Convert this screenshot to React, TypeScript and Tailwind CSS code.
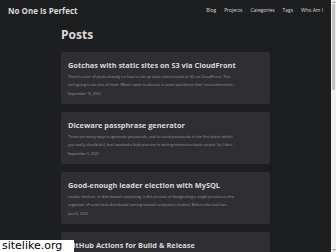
import React from 'react';

const posts = [
	{
		title: 'Gotchas with static sites on S3 via CloudFront',
		lines: [
			"There's a ton of posts already on how to set up static sites hosted on S3 via CloudFront. This",
			"isn't going to be one of them. What I want to discuss is some weirdness that I encountered wi...",
		],
		date: 'September 16, 2022',
	},
	{
		title: 'Diceware passphrase generator',
		lines: [
			'There are many ways to generate passwords, and to avoid passwords in the first place (which',
			'you really should do), but I wanted a little practice in writing interactive bash scripts. So I deci...',
		],
		date: 'September 5, 2022',
	},
	{
		title: 'Good-enough leader election with MySQL',
		lines: [
			'Leader election, in distributed computing, is the process of designating a single process as the',
			'organizer of some task distributed among several computers (nodes). Before the task has...',
		],
		date: 'June 6, 2022',
	},
	{
		title: 'GitHub Actions for Build & Release',
		lines: [
			'Continuous integration and delivery is one of those things that every project should have from',
			'the very start, and GitHub Actions makes it easy to set up for small projects like this one...',
		],
		date: 'May 2, 2022',
	},
];

const nav = ['Blog', 'Projects', 'Categories', 'Tags', 'Who Am I'];

export default function App() {
	return (
		<div
			className="relative flex h-[252px] w-[336px] overflow-hidden bg-[#1d1e20]"
			style={{ fontFamily: '"Open Sans", "Noto Sans", sans-serif' }}>
			<div className="flex-1 min-w-0">
				<header className="flex h-[22px] items-center justify-between pl-[8px] pr-[8px]">
					<span className="text-[8px] font-bold text-[#dadadb]">No One Is Perfect</span>
					<nav className="flex gap-[8px]">
						{nav.map((item) => (
							<span key={item} className="whitespace-nowrap text-[4.9px] text-[#dadadb]">
								{item}
							</span>
						))}
					</nav>
				</header>
				<main className="mx-auto w-[209px] pt-[4px]">
					<h1 className="mb-[8px] text-[12px] font-bold leading-[18px] text-[#dadadb]">Posts</h1>
					<div className="flex flex-col gap-[8px]">
						{posts.map((post) => (
							<article key={post.title} className="rounded-[2px] bg-[#2e2e33] px-[7px] pb-[6px] pt-[7px]">
								<h2 className="text-[7.4px] font-bold leading-[12px] text-[#dadadb]">{post.title}</h2>
								<div className="mt-[2px] text-[3.8px] leading-[8px] text-[#9b9c9d]">
									{post.lines.map((line) => (
										<div key={line} className="overflow-hidden whitespace-nowrap">
											{line}
										</div>
									))}
								</div>
								<div className="mt-[1px] text-[3.5px] leading-[8px] text-[#9b9c9d]">{post.date}</div>
							</article>
						))}
					</div>
				</main>
			</div>
			<div className="flex w-[5px] flex-col bg-[#f1f1f1]">
				<div className="mx-auto mt-[1px] h-0 w-0 border-x-[2px] border-b-[2px] border-x-transparent border-b-[#a3a3a3]" />
				<div className="mx-[1px] mt-[1px] h-[86px] rounded-[1px] bg-[#c1c1c1]" />
				<div className="flex-1" />
				<div className="mx-auto mb-[1px] h-0 w-0 border-x-[2px] border-t-[2px] border-x-transparent border-t-[#a3a3a3]" />
			</div>
			<div className="absolute bottom-0 left-0 bg-white pl-[2px] pr-[12px] text-[11px] leading-[12px] text-black" style={{ fontFamily: '"DejaVu Sans", sans-serif' }}>
				sitelike.org
			</div>
		</div>
	);
}
